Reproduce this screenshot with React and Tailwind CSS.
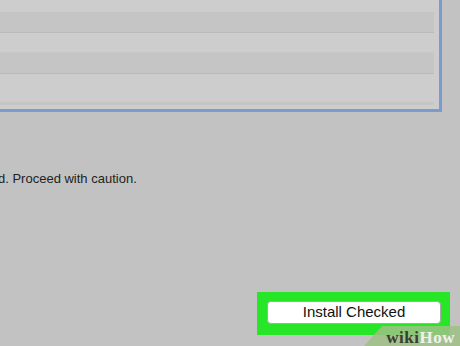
export default function App() {
  return (
    <div className="relative w-[460px] h-[346px] overflow-hidden bg-[#c2c2c2] font-['Liberation_Sans',Arial,sans-serif]">
      {/* table panel */}
      <div className="w-[442px] h-[112px] border-r-[3px] border-b-[3px] border-[#7b9bcf] bg-[#cdcdcd] pr-[5px] pb-[4px]">
        <div className="flex flex-col h-full">
          <div className="h-[12px] bg-[#cdcdcd]" />
          <div className="h-[20px] bg-[#c5c5c5]" />
          <div className="h-[1px] bg-[#bababa]" />
          <div className="h-[20px] bg-[#cdcdcd] border-b border-[#c8c8c8]" />
          <div className="h-[20px] bg-[#c5c5c5]" />
          <div className="h-[1px] bg-[#bababa]" />
          <div className="flex-1 bg-[#cdcdcd]" />
          <div className="h-[3px] bg-[#c6c6c6]" />
        </div>
      </div>

      <div className="mt-[59px] ml-[-2px] text-[13px] leading-[16px] text-[#222]">
        d. Proceed with caution.
      </div>

      <div className="mt-[105px] flex justify-end pr-[10px]">
        <div className="bg-[#27e627] pl-[10px] pt-[9px] pr-[9px] pb-[11px]">
          <div className="w-[174px] h-[23px] bg-white rounded-[4px] border border-[#a8a8a8] flex items-center justify-center text-[15px] text-[#111]">
            Install Checked
          </div>
        </div>
      </div>

      {/* wikiHow watermark */}
      <svg className="absolute right-0 bottom-0" width="96" height="20" viewBox="0 0 96 20">
        <polygon points="0,20 18,0 96,0 96,20" fill="#9fbf86" fillOpacity="0.85" />
      </svg>
      <div className="absolute right-[5px] bottom-[-2px] font-['Liberation_Serif',serif] font-bold text-[17px] leading-[20px] tracking-[0.5px]">
        <span className="text-[#34412b]">wiki</span>
        <span className="text-[#eef3e8]">How</span>
      </div>
    </div>
  );
}
